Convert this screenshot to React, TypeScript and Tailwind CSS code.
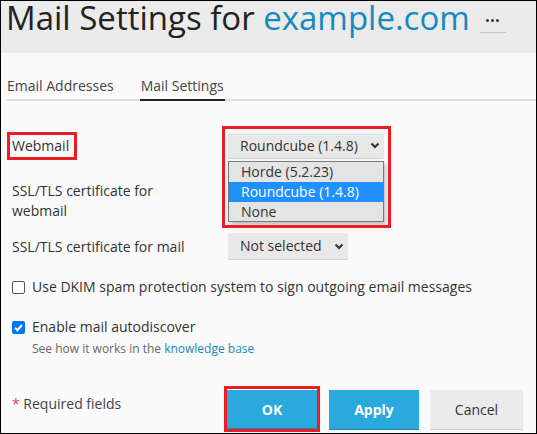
import React from 'react';

const Chevron = () => (
    <svg width="10" height="7" viewBox="0 0 10 7" className="shrink-0">
        <path d="M1.5 1.5 L5 5 L8.5 1.5" fill="none" stroke="#333" strokeWidth="2" />
    </svg>
);

const Checkbox: React.FC<{ checked?: boolean }> = ({ checked }) =>
    checked ? (
        <span className="flex h-[13px] w-[13px] items-center justify-center rounded-[2px] bg-[#0075ff]">
            <svg width="11" height="11" viewBox="0 0 11 11">
                <path d="M2 5.8 L4.4 8.2 L9 3" fill="none" stroke="#fff" strokeWidth="2" />
            </svg>
        </span>
    ) : (
        <span className="block h-[13px] w-[13px] rounded-[2px] border border-[#555] bg-white" />
    );

export default function App() {
    return (
        <div
            className="relative h-[434px] w-[537px] overflow-hidden border border-black bg-[#fafafa] text-[#333]"
            style={{ fontFamily: '"Open Sans", "Liberation Sans", sans-serif' }}
        >
            {/* header */}
            <div className="flex h-[52px] items-start bg-[#ebebeb] pl-[5px]">
                <h1 className="text-[33px] leading-[34px] text-[#222] whitespace-nowrap">
                    Mail Settings for <span className="text-[#1789c2]">example.com</span>
                </h1>
                <div className="ml-[10px] mt-[12px] flex h-[20px] w-[26px] justify-center gap-[2px] border-b border-[#c8c8c8] pt-[6px]">
                    <span className="h-[3px] w-[3px] rounded-full bg-[#333]" />
                    <span className="h-[3px] w-[3px] rounded-full bg-[#333]" />
                    <span className="h-[3px] w-[3px] rounded-full bg-[#333]" />
                </div>
            </div>

            {/* tabs */}
            <div className="ml-[5px] mt-[23px] flex gap-[26px] border-b-2 border-[#dedede] text-[14px] leading-[19px] text-[#444]">
                <div className="-mb-[2px] border-b-2 border-transparent pb-[4px] pl-[1px]">Email Addresses</div>
                <div className="-mb-[2px] border-b-2 border-[#222] px-[1px] pb-[4px]">Mail Settings</div>
            </div>

            {/* form */}
            <div className="pl-[11px] text-[14px] leading-[20px]">
                <div className="mt-[32px] flex h-[26px] items-center">
                    <div className="w-[216px]">
                        <span className="-ml-[5px] inline-block border-[3px] border-[#ec1c24] py-[1px] pl-[2px] pr-[5px]">Webmail</span>
                    </div>
                    <div className="relative">
                        <div className="flex h-[26px] w-[156px] items-center justify-between rounded-[2px] border-b border-[#d0d0d0] bg-[#e8e8e8] pl-[12px] pr-[4px]">
                            <span>Roundcube (1.4.8)</span>
                            <Chevron />
                        </div>
                        <div className="absolute left-0 top-[28px] z-10 w-[156px] border border-[#7a7a7a] bg-[#e4e4e4] shadow-[2px_3px_5px_rgba(0,0,0,0.25)]">
                            <div className="h-[20px] pl-[12px] leading-[20px]">Horde (5.2.23)</div>
                            <div className="h-[20px] bg-[#1e90ff] pl-[12px] leading-[20px] text-white">Roundcube (1.4.8)</div>
                            <div className="h-[19px] pl-[12px] leading-[19px]">None</div>
                        </div>
                        <div className="pointer-events-none absolute -left-[6px] -top-[7px] z-20 h-[102px] w-[169px] border-[3px] border-[#ec1c24]" />
                    </div>
                </div>

                <div className="mt-[22px] flex">
                    <div className="w-[180px]">SSL/TLS certificate for webmail</div>
                </div>

                <div className="mt-[12px] flex h-[27px] items-center">
                    <div className="w-[216px]">SSL/TLS certificate for mail</div>
                    <div className="flex h-[27px] w-[120px] items-center justify-between rounded-[2px] border-b border-[#d0d0d0] bg-[#e8e8e8] pl-[12px] pr-[4px]">
                        <span>Not selected</span>
                        <Chevron />
                    </div>
                </div>

                <div className="mt-[17px] flex items-center gap-[7px]">
                    <Checkbox />
                    <span>Use DKIM spam protection system to sign outgoing email messages</span>
                </div>

                <div className="mt-[20px] flex items-center gap-[7px]">
                    <Checkbox checked />
                    <span>Enable mail autodiscover</span>
                </div>
                <div className="mt-[4px] pl-[20px] text-[12px] leading-[16px] text-[#666]">
                    See how it works in the <span className="text-[#1789c2]">knowledge base</span>
                </div>
            </div>

            {/* footer */}
            <div className="mt-[33px] flex items-start justify-between pl-[11px] pr-[13px]">
                <div className="mt-[4px] text-[14px] leading-[20px] text-[#444]">
                    <span className="text-[#e0405a]">*</span> Required fields
                </div>
                <div className="flex items-start">
                    <div className="-mt-[4px] border-[3px] border-[#ec1c24] pt-[1px]">
                        <button className="h-[39px] w-[90px] border-b border-[#1f8ab8] bg-[#29a9dd] text-[14px] font-bold text-white">OK</button>
                    </div>
                    <button className="ml-[9px] h-[40px] w-[90px] border-b border-[#1f8ab8] bg-[#29a9dd] text-[14px] font-bold text-white">Apply</button>
                    <button className="ml-[11px] h-[40px] w-[93px] border-b border-[#cfcfcf] bg-[#ebebeb] text-[14px] text-[#333]">Cancel</button>
                </div>
            </div>
        </div>
    );
}
